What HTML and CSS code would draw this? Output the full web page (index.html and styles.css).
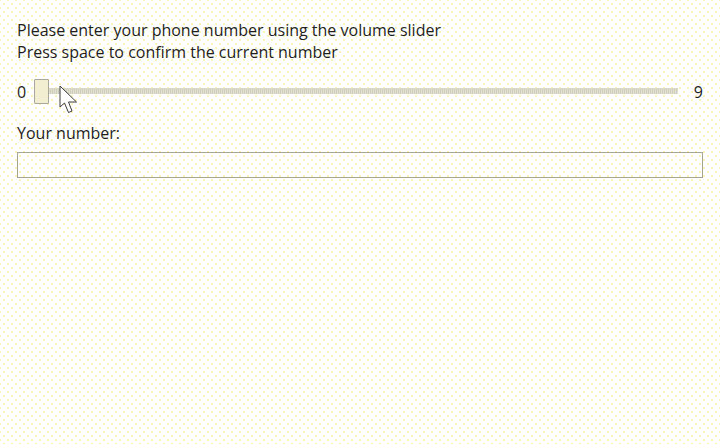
FILE: index.html
```html
<!DOCTYPE html>
<html lang="en">
<head>
<meta charset="utf-8">
<title>Phone number slider</title>
<link rel="stylesheet" href="styles.css">
</head>
<body>
<main class="page">
  <p class="intro">Please enter your phone number using the volume slider<br>Press space to confirm the current number</p>
  <div class="slider-row">
    <span class="label">0</span>
    <div class="slider">
      <div class="track"></div>
      <div class="thumb"></div>
      <svg class="cursor" width="20" height="30" viewBox="0 0 20 30" aria-hidden="true">
        <path d="M1 1 L1 22 L5.5 18 L9.5 27.5 L13 26 L9.5 17 L17.5 17 Z" fill="#ffffff" stroke="#3a3a3a" stroke-width="1" stroke-linejoin="miter"/>
      </svg>
    </div>
    <span class="label">9</span>
  </div>
  <label class="field-label" for="num">Your number:</label>
  <input class="field" id="num" type="text">
</main>
</body>
</html>
```
FILE: styles.css
```css
html, body {
  margin: 0;
  padding: 0;
}
body {
  width: 720px;
  height: 444px;
  overflow: hidden;
  background-color: #ffffff;
  background-image:
    radial-gradient(circle, #f4e860 0.6px, transparent 0.8px),
    radial-gradient(circle, #f4e860 0.6px, transparent 0.8px);
  background-size: 8px 8px, 8px 8px;
  background-position: 0 0, 4px 4px;
  font-family: "Open Sans", "Noto Sans", sans-serif;
  color: #1e1e1e;
}
.page {
  padding: 19px 17px 0 17px;
  display: flex;
  flex-direction: column;
}
.intro {
  margin: 0;
  font-size: 16px;
  line-height: 22px;
}
.slider-row {
  display: flex;
  align-items: center;
  margin-top: 16px;
  height: 26px;
}
.label {
  font-size: 16px;
  line-height: 20px;
}
.slider {
  position: relative;
  flex: 1;
  height: 26px;
  margin: 0 16px 0 8px;
}
.track {
  position: absolute;
  left: 14px;
  right: 0;
  top: 9px;
  height: 5px;
  background: repeating-linear-gradient(90deg, #cfcebd 0 1px, #e2e1cf 1px 2px);
  border-top: 1px solid #dad9c8;
}
.thumb {
  position: absolute;
  left: 0;
  top: 0;
  width: 13px;
  height: 23px;
  background: #f1eed2;
  border: 1px solid #a9a89a;
  border-radius: 1px;
}
.cursor {
  position: absolute;
  left: 25px;
  top: 6px;
}
.field-label {
  margin-top: 17px;
  font-size: 16px;
  line-height: 22px;
}
.field {
  margin: 8px 0 0 0;
  box-sizing: border-box;
  width: 686px;
  height: 26px;
  border: 1px solid #a8a68e;
  background: transparent;
  padding: 0 4px;
  font: inherit;
  outline: none;
}
```
